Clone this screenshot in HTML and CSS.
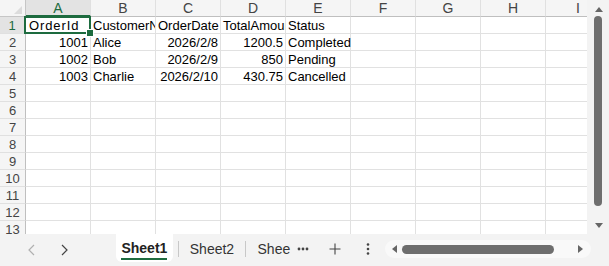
FILE: index.html
```html
<!DOCTYPE html>
<html>
<head>
<meta charset="utf-8">
<link rel="stylesheet" href="styles.css">
</head>
<body>
<div class="app">
  <div class="sheet-area">
    <div class="grid">
      <div class="corner"><span class="corner-tri"></span></div>
      <div class="colh sel">A</div>
      <div class="colh">B</div>
      <div class="colh">C</div>
      <div class="colh">D</div>
      <div class="colh">E</div>
      <div class="colh">F</div>
      <div class="colh">G</div>
      <div class="colh">H</div>
      <div class="colh">I</div>

      <div class="rowh sel">1</div>
      <div class="cell active"><span class="wide">OrderId</span></div>
      <div class="cell">CustomerName</div>
      <div class="cell">OrderDate</div>
      <div class="cell">TotalAmount</div>
      <div class="cell">Status</div>
      <div class="cell"></div><div class="cell"></div><div class="cell"></div><div class="cell"></div>

      <div class="rowh">2</div>
      <div class="cell num">1001</div>
      <div class="cell">Alice</div>
      <div class="cell num">2026/2/8</div>
      <div class="cell num">1200.5</div>
      <div class="cell spill">Completed</div>
      <div class="cell"></div><div class="cell"></div><div class="cell"></div><div class="cell"></div>

      <div class="rowh">3</div>
      <div class="cell num">1002</div>
      <div class="cell">Bob</div>
      <div class="cell num">2026/2/9</div>
      <div class="cell num">850</div>
      <div class="cell spill">Pending</div>
      <div class="cell"></div><div class="cell"></div><div class="cell"></div><div class="cell"></div>

      <div class="rowh">4</div>
      <div class="cell num">1003</div>
      <div class="cell">Charlie</div>
      <div class="cell num">2026/2/10</div>
      <div class="cell num">430.75</div>
      <div class="cell spill">Cancelled</div>
      <div class="cell"></div><div class="cell"></div><div class="cell"></div><div class="cell"></div>

      <div class="rowh">5</div><div class="cell"></div><div class="cell"></div><div class="cell"></div><div class="cell"></div><div class="cell"></div><div class="cell"></div><div class="cell"></div><div class="cell"></div><div class="cell"></div>
      <div class="rowh">6</div><div class="cell"></div><div class="cell"></div><div class="cell"></div><div class="cell"></div><div class="cell"></div><div class="cell"></div><div class="cell"></div><div class="cell"></div><div class="cell"></div>
      <div class="rowh">7</div><div class="cell"></div><div class="cell"></div><div class="cell"></div><div class="cell"></div><div class="cell"></div><div class="cell"></div><div class="cell"></div><div class="cell"></div><div class="cell"></div>
      <div class="rowh">8</div><div class="cell"></div><div class="cell"></div><div class="cell"></div><div class="cell"></div><div class="cell"></div><div class="cell"></div><div class="cell"></div><div class="cell"></div><div class="cell"></div>
      <div class="rowh">9</div><div class="cell"></div><div class="cell"></div><div class="cell"></div><div class="cell"></div><div class="cell"></div><div class="cell"></div><div class="cell"></div><div class="cell"></div><div class="cell"></div>
      <div class="rowh">10</div><div class="cell"></div><div class="cell"></div><div class="cell"></div><div class="cell"></div><div class="cell"></div><div class="cell"></div><div class="cell"></div><div class="cell"></div><div class="cell"></div>
      <div class="rowh">11</div><div class="cell"></div><div class="cell"></div><div class="cell"></div><div class="cell"></div><div class="cell"></div><div class="cell"></div><div class="cell"></div><div class="cell"></div><div class="cell"></div>
      <div class="rowh">12</div><div class="cell"></div><div class="cell"></div><div class="cell"></div><div class="cell"></div><div class="cell"></div><div class="cell"></div><div class="cell"></div><div class="cell"></div><div class="cell"></div>
      <div class="rowh">13</div><div class="cell"></div><div class="cell"></div><div class="cell"></div><div class="cell"></div><div class="cell"></div><div class="cell"></div><div class="cell"></div><div class="cell"></div><div class="cell"></div>
    </div>
    <div class="vscroll">
      <svg class="varrow" width="10" height="8" viewBox="0 0 10 8"><path d="M1 7 L5 2 L9 7 Z" fill="#666"/></svg>
      <div class="vthumb"></div>
      <svg class="varrow" width="10" height="8" viewBox="0 0 10 8"><path d="M1 1 L5 6 L9 1 Z" fill="#666"/></svg>
    </div>
  </div>
  <div class="tabbar">
    <div class="navs">
      <svg class="nav" width="10" height="14" viewBox="0 0 10 14"><path d="M7 2 L2 7 L7 12" fill="none" stroke="#b0b0b0" stroke-width="1.2"/></svg>
      <svg class="nav" width="10" height="14" viewBox="0 0 10 14"><path d="M3 2 L8 7 L3 12" fill="none" stroke="#444" stroke-width="1.2"/></svg>
    </div>
    <div class="tabs">
      <div class="tab active"><span>Sheet1</span></div>
      <div class="sep"></div>
      <div class="tab second"><span>Sheet2</span></div>
      <div class="sep"></div>
      <div class="tab cut"><span>Shee</span></div>
      <div class="more">
        <svg width="12" height="4" viewBox="0 0 12 4"><circle cx="2" cy="2" r="1.4" fill="#444"/><circle cx="6" cy="2" r="1.4" fill="#444"/><circle cx="10" cy="2" r="1.4" fill="#444"/></svg>
      </div>
      <div class="plus">
        <svg width="12" height="12" viewBox="0 0 12 12"><path d="M6 0.5 V11.5 M0.5 6 H11.5" stroke="#444" stroke-width="1.1"/></svg>
      </div>
      <div class="kebab">
        <svg width="4" height="14" viewBox="0 0 4 14"><circle cx="2" cy="2.5" r="1.3" fill="#444"/><circle cx="2" cy="7" r="1.3" fill="#444"/><circle cx="2" cy="11.5" r="1.3" fill="#444"/></svg>
      </div>
    </div>
    <div class="hscroll">
      <svg class="harrow" width="8" height="10" viewBox="0 0 8 10"><path d="M7 1 L2 5 L7 9 Z" fill="#666"/></svg>
      <div class="hthumb"></div>
      <svg class="harrow" width="8" height="10" viewBox="0 0 8 10"><path d="M1 1 L6 5 L1 9 Z" fill="#666"/></svg>
    </div>
  </div>
</div>
</body>
</html>
```

FILE: styles.css
```css
* { box-sizing: border-box; }
html, body { margin: 0; padding: 0; }
body {
  width: 609px;
  height: 266px;
  overflow: hidden;
  background: #f3f3f3;
  font-family: "Liberation Sans", Arial, sans-serif;
}
.app {
  width: 609px;
  height: 266px;
  display: flex;
  flex-direction: column;
}
.sheet-area {
  height: 234px;
  display: flex;
  flex-direction: row;
  background: #fff;
}
.grid {
  width: 587px;
  height: 234px;
  overflow: hidden;
  display: grid;
  grid-template-columns: 26px repeat(9, 65px);
  grid-template-rows: 17px repeat(13, 17px);
  background: #fff;
}
.corner {
  background: #f5f5f5;
  border-right: 1px solid #c6c6c6;
  border-bottom: 1px solid #c6c6c6;
  position: relative;
}
.corner-tri {
  position: absolute;
  right: 3px;
  bottom: 2px;
  width: 0;
  height: 0;
  border-left: 8px solid transparent;
  border-bottom: 8px solid #dcdcdc;
}
.colh {
  background: #f5f5f5;
  border-right: 1px solid #e0e0e0;
  border-bottom: 1px solid #bfbfbf;
  color: #444;
  font-size: 14px;
  line-height: 16px;
  text-align: center;
}
.colh.sel {
  background: #e3e3e3;
  color: #1d6b3f;
  border-bottom: 2px solid #1d6b3f;
}
.rowh {
  background: #f5f5f5;
  border-right: 1px solid #bfbfbf;
  border-bottom: 1px solid #e0e0e0;
  color: #444;
  font-size: 13px;
  line-height: 16px;
  padding-top: 1px;
  text-align: center;
  overflow: hidden;
}
.rowh.sel {
  background: #e3e3e3;
  color: #1d6b3f;
  border-right: 2px solid #1d6b3f;
}
.cell {
  border-right: 1px solid #e1e1e1;
  border-bottom: 1px solid #e1e1e1;
  font-size: 13px;
  line-height: 16px;
  color: #000;
  padding: 1px 2px 0 2px;
  white-space: nowrap;
  overflow: hidden;
}
.cell.num { text-align: right; }
.cell.spill { overflow: visible; }
.cell.active {
  position: relative;
  overflow: visible;
  z-index: 2;
  padding-left: 3px;
}
.wide { letter-spacing: 0.9px; }
.cell.active::before {
  content: "";
  position: absolute;
  left: -2px;
  top: -1px;
  right: -1px;
  bottom: -1px;
  border: 2px solid #1d6b3f;
}
.cell.active::after {
  content: "";
  position: absolute;
  right: -4px;
  bottom: -4px;
  width: 6px;
  height: 6px;
  background: #1d6b3f;
  border: 1px solid #fff;
}
.vscroll {
  width: 22px;
  height: 234px;
  background: #f3f3f3;
  display: flex;
  flex-direction: column;
  align-items: center;
  padding: 5px 0 4px 0;
  gap: 3px;
}
.vthumb {
  flex: 1;
  width: 8px;
  margin-bottom: 13px;
  background: #6e6e6e;
  border-radius: 4px;
}
.varrow { flex: none; margin-left: 1px; }
.tabbar {
  height: 32px;
  display: flex;
  flex-direction: row;
  align-items: stretch;
  background: #f3f3f3;
}
.navs {
  width: 116px;
  display: flex;
  align-items: center;
  padding-left: 27px;
  gap: 22px;
}
.tabs {
  display: flex;
  align-items: center;
  width: 265px;
}
.tab {
  font-size: 14px;
  color: #333;
  height: 28px;
  display: flex;
  align-items: center;
  align-self: flex-start;
  padding-top: 1px;
}
.tab.active {
  background: #fff;
  border-radius: 0 0 6px 6px;
  font-weight: bold;
  color: #222;
  width: 57px;
  margin-right: 5px;
  justify-content: center;
  padding-top: 0;
}
.tab.active span {
  border-bottom: 2px solid #1d6b3f;
  padding-bottom: 2px;
  margin-top: 4px;
}
.tab.second { width: 66px; padding-left: 11px; }
.tab.cut { width: 46px; padding-left: 12px; }
.sep {
  width: 1px;
  height: 16px;
  background: #c8c8c8;
  margin-bottom: 3px;
  flex: none;
}
.more { width: 24px; display: flex; justify-content: center; margin-bottom: 3px; }
.plus { width: 40px; display: flex; justify-content: center; margin-bottom: 3px; }
.kebab { width: 26px; display: flex; justify-content: center; margin-bottom: 3px; }
.hscroll {
  width: 206px;
  height: 18px;
  margin-top: 6px;
  margin-left: 4px;
  background: #f9f9f9;
  border-radius: 9px;
  display: flex;
  align-items: center;
  padding: 0 6px 0 5px;
  gap: 4px;
}
.hthumb {
  width: 152px;
  height: 9px;
  background: #6e6e6e;
  border-radius: 5px;
}
.harrow { flex: none; }
.hscroll .harrow:last-child { margin-left: auto; }
```
